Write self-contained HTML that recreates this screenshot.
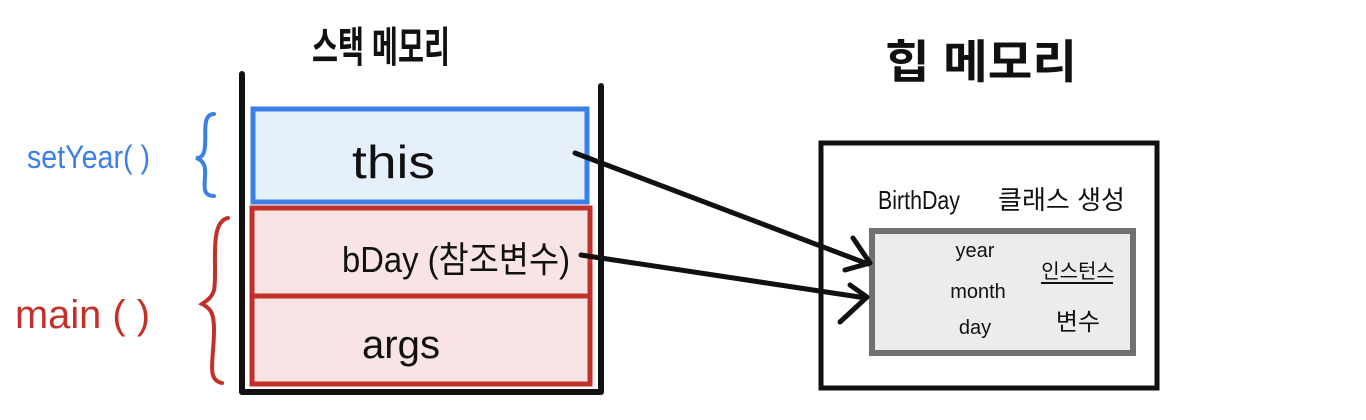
<!DOCTYPE html>
<html><head><meta charset="utf-8"><style>
html,body{margin:0;padding:0;background:#fff;width:1366px;height:420px;overflow:hidden}
svg{display:block}
text{font-family:"Liberation Sans","Noto Sans CJK KR","NanumGothic",sans-serif}
</style></head><body>
<svg width="1366" height="420" viewBox="0 0 1366 420" xmlns="http://www.w3.org/2000/svg">
<!-- titles -->
<text x="312" y="62" font-size="42" font-weight="bold" fill="#111" textLength="138" lengthAdjust="spacingAndGlyphs">스택 메모리</text>
<text x="885" y="78" font-size="46" font-weight="bold" fill="#111" textLength="192" lengthAdjust="spacingAndGlyphs">힙 메모리</text>
<!-- stack walls -->
<path d="M242 74 L242 392 L601 392 L601 86" fill="none" stroke="#111" stroke-width="6" stroke-linecap="round" stroke-linejoin="round"/>
<!-- blue frame -->
<rect x="253" y="109" width="334" height="93" fill="#e6f0fb" stroke="#3b7fe8" stroke-width="5"/>
<!-- red frames -->
<rect x="252" y="208" width="338" height="176" fill="#f8e4e4" stroke="#c3302a" stroke-width="5"/>
<line x1="252" y1="296" x2="590" y2="296" stroke="#c3302a" stroke-width="5"/>
<text x="352" y="178" font-size="46" fill="#111" textLength="83" lengthAdjust="spacingAndGlyphs">this</text>
<text x="342" y="272" font-size="36" fill="#111" textLength="228" lengthAdjust="spacingAndGlyphs">bDay (참조변수)</text>
<text x="362" y="358" font-size="40" fill="#111" textLength="78" lengthAdjust="spacingAndGlyphs">args</text>
<!-- labels -->
<text x="27" y="168" font-size="32" fill="#3b7fe8" textLength="123" lengthAdjust="spacingAndGlyphs">setYear( )</text>
<path d="M214 114 C200 114 208 140 204 152 C202 158 198 158 196 158 C200 159 205 163 205 170 C206 182 200 196 214 196" fill="none" stroke="#3b7fe8" stroke-width="4" stroke-linecap="round"/>
<text x="15" y="328" font-size="40" fill="#c3302a" textLength="135" lengthAdjust="spacingAndGlyphs">main ( )</text>
<path d="M228 218 C208 222 218 270 214 290 C212 298 205 302 202 304 C210 308 214 312 214 330 C214 360 206 380 222 383" fill="none" stroke="#c3302a" stroke-width="4" stroke-linecap="round"/>
<!-- heap boxes -->
<rect x="821" y="143" width="336" height="245" fill="#fff" stroke="#111" stroke-width="5"/>
<rect x="872" y="231" width="261" height="122" fill="#ececec" stroke="#707070" stroke-width="6"/>
<text x="878" y="209" font-size="26" fill="#111" textLength="82" lengthAdjust="spacingAndGlyphs">BirthDay</text>
<text x="998" y="209" font-size="26" fill="#111" textLength="127" lengthAdjust="spacingAndGlyphs">클래스 생성</text>
<text x="975" y="257" font-size="20" text-anchor="middle" fill="#111">year</text>
<text x="978" y="298" font-size="20" text-anchor="middle" fill="#111">month</text>
<text x="975" y="334" font-size="20" text-anchor="middle" fill="#111">day</text>
<text x="1078" y="278" font-size="20" text-anchor="middle" fill="#111">인스턴스</text>
<line x1="1041" y1="283" x2="1113" y2="283" stroke="#111" stroke-width="2"/>
<text x="1078" y="330" font-size="24" text-anchor="middle" fill="#111">변수</text>
<!-- arrows -->
<g fill="none" stroke="#111" stroke-width="5" stroke-linecap="round" stroke-linejoin="round">
<line x1="575" y1="153" x2="868" y2="264"/>
<path d="M853 238 L870 263 L845 270"/>
<line x1="581" y1="255" x2="866" y2="298"/>
<path d="M850 285 L867 297 L840 322"/>
</g>
</svg>
</body></html>
